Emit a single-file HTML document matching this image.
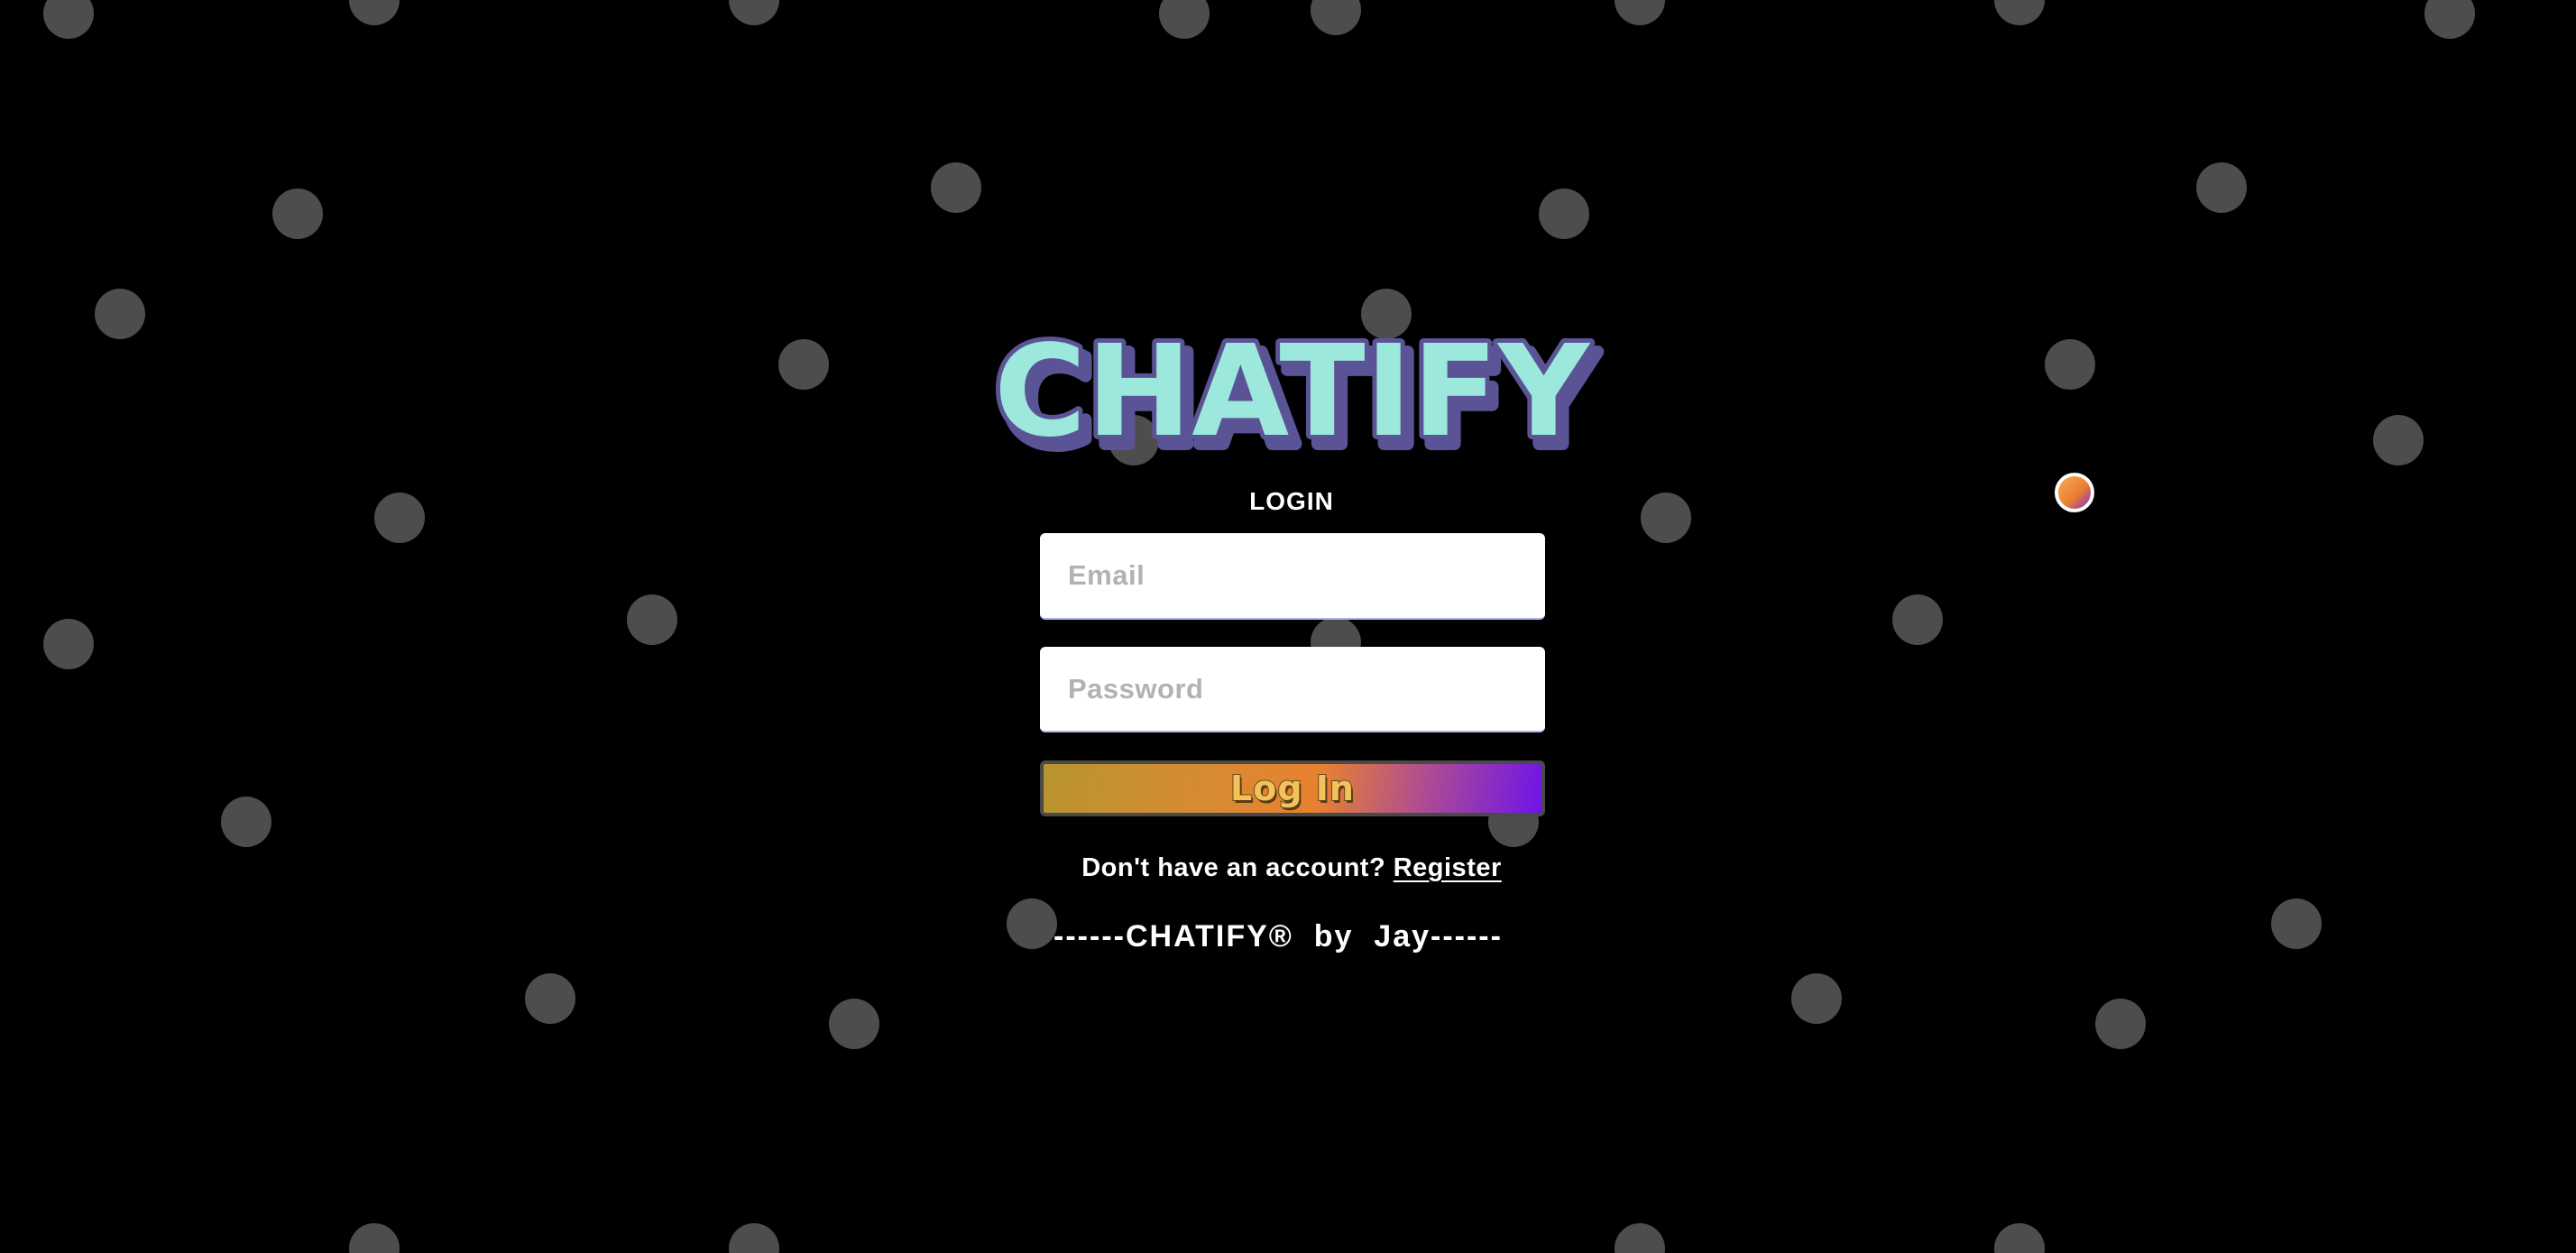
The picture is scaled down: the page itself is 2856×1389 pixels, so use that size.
<!DOCTYPE html>
<html><head><meta charset="utf-8">
<style>
html,body{margin:0;padding:0;background:#000;width:2856px;height:1389px;overflow:hidden;font-family:"Liberation Sans",sans-serif;}
#bg{position:absolute;left:0;top:0}
.abs{position:absolute}
.login{left:0;width:2864px;top:540px;text-align:center;color:#fff;font-size:28px;font-weight:bold;letter-spacing:1px}
.inp{left:1153px;width:560px;background:#fff;border-radius:6px;border-bottom:2px solid #a9b6ee;box-sizing:border-box}
.inp span{position:absolute;left:31px;top:50%;transform:translateY(-50%);color:#b2b2b2;font-size:31px;font-weight:bold;letter-spacing:0.5px}
.btn{left:1153px;top:843px;width:560px;height:62px;box-sizing:border-box;border:4px solid #4a4a4a;border-radius:6px;
background:linear-gradient(100deg,#b8952e 0%,#d98a30 35%,#e8812f 55%,#b14f8e 75%,#6f14e8 100%);text-align:center}
.btn b{font-family:"DejaVu Sans",sans-serif;font-size:38px;line-height:54px;color:#f3c35a;-webkit-text-stroke:2px #6b4a1e;paint-order:stroke fill;text-shadow:2px 3px 0 #5a3c14;letter-spacing:1px}
.reg{left:0;width:2864px;top:946px;text-align:center;color:#fff;font-size:29px;font-weight:bold;letter-spacing:0.5px}
.reg u{text-underline-offset:5px}
.foot{left:1120px;width:594px;top:1019px;color:#fff;font-size:34px;font-weight:bold;letter-spacing:2px;white-space:nowrap;text-align:center}
</style></head><body>
<svg id="bg" width="2856" height="1389" xmlns="http://www.w3.org/2000/svg">
<g fill="#4d4d4d">
<circle cx="76" cy="15" r="28"/><circle cx="415" cy="0" r="28"/><circle cx="836" cy="0" r="28"/><circle cx="1313" cy="15" r="28"/><circle cx="1481" cy="11" r="28"/><circle cx="1818" cy="0" r="28"/><circle cx="2239" cy="0" r="28"/><circle cx="2716" cy="15" r="28"/>
<circle cx="1060" cy="208" r="28"/><circle cx="330" cy="237" r="28"/><circle cx="1734" cy="237" r="28"/><circle cx="2463" cy="208" r="28"/>
<circle cx="133" cy="348" r="28"/><circle cx="1537" cy="348" r="28"/><circle cx="891" cy="404" r="28"/><circle cx="2295" cy="404" r="28"/>
<circle cx="1257" cy="488" r="28"/><circle cx="2659" cy="488" r="28"/><circle cx="443" cy="574" r="28"/><circle cx="1847" cy="574" r="28"/>
<circle cx="723" cy="687" r="28"/><circle cx="2126" cy="687" r="28"/><circle cx="76" cy="714" r="28"/><circle cx="1481" cy="712" r="28"/>
<circle cx="273" cy="911" r="28"/><circle cx="1678" cy="911" r="28"/><circle cx="1144" cy="1024" r="28"/><circle cx="2546" cy="1024" r="28"/>
<circle cx="610" cy="1107" r="28"/><circle cx="2014" cy="1107" r="28"/><circle cx="947" cy="1135" r="28"/><circle cx="2351" cy="1135" r="28"/>
<circle cx="415" cy="1384" r="28"/><circle cx="836" cy="1384" r="28"/><circle cx="1818" cy="1384" r="28"/><circle cx="2239" cy="1384" r="28"/>
</g>
<defs><linearGradient id="og" x1="0" y1="0" x2="1" y2="1"><stop offset="0" stop-color="#f4b060"/><stop offset="0.55" stop-color="#ec7f30"/><stop offset="1" stop-color="#7a22d8"/></linearGradient></defs>
<circle cx="2300" cy="546" r="20" fill="url(#og)" stroke="#fff" stroke-width="4"/>
<g font-family="DejaVu Sans" font-weight="bold" font-size="140">
<text x="1110" y="492" textLength="660" lengthAdjust="spacingAndGlyphs" fill="#5a5496" stroke="#5a5496" stroke-width="14" stroke-linejoin="round">CHATIFY</text>
<text x="1102" y="482" textLength="660" lengthAdjust="spacingAndGlyphs" fill="#9de8dc" stroke="#5a5496" stroke-width="10" stroke-linejoin="round" paint-order="stroke fill">CHATIFY</text>
</g>
</svg>
<div class="abs login">LOGIN</div>
<div class="abs inp" style="top:591px;height:96px"><span>Email</span></div>
<div class="abs inp" style="top:717px;height:95px"><span>Password</span></div>
<div class="abs btn"><b>Log In</b></div>
<div class="abs reg">Don't have an account? <u>Register</u></div>
<div class="abs foot">------CHATIFY®&nbsp; by &nbsp;Jay------</div>
</body></html>
